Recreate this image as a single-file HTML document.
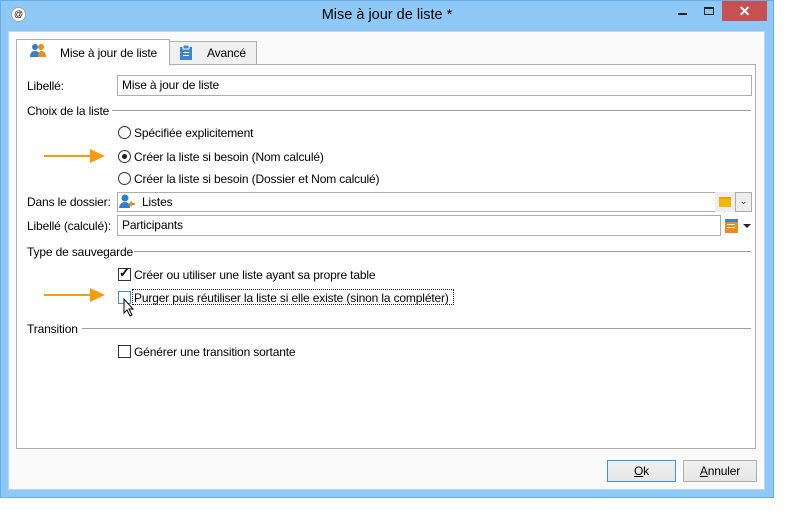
<!DOCTYPE html>
<html><head><meta charset="utf-8"><style>
*{box-sizing:border-box;margin:0;padding:0}
body{width:812px;height:521px;background:#fff;position:relative;overflow:hidden;font-family:"Liberation Sans",sans-serif;font-size:12px;letter-spacing:-0.15px;color:#000}
.a{position:absolute}
.win{left:0;top:0;width:774px;height:498px;background:#8ec8f6;border:1px solid #6aaee6}
.inner{left:8px;top:31px;width:757px;height:459px;background:#fafafa;border:1px solid #b8d6ee}
.panel{left:16px;top:64px;width:740px;height:385px;background:#fff;border:1px solid #adadad}
.inp{border:1px solid #adadad;background:#fff;height:21px;padding:2px 4px;line-height:15px}
.lbl{line-height:14px}
.line{height:1px;background:#a0a0a0}
.rad{width:13px;height:13px;border:1px solid #333;border-radius:50%;background:#fff}
.cb{width:13px;height:13px;border:1px solid #333;background:#fff}
.btn{border:1px solid #adadad;background:linear-gradient(#f0f0f0,#e5e5e5);text-align:center;line-height:20px;height:22px}
</style></head><body>
<div class="a win"></div>
<div class="a" style="left:11px;top:7px;width:15px;height:15px;border-radius:50%;background:#fff;border:1px solid #9a9;font-size:9px;text-align:center;line-height:13px">@</div>
<div class="a" style="left:0;width:774px;top:7px;text-align:center;font-size:14.5px;color:#000;letter-spacing:0">Mise à jour de liste *</div>
<div class="a" style="left:678px;top:13px;width:9px;height:2px;background:#222"></div>
<div class="a" style="left:704px;top:7px;width:10px;height:8px;border:1px solid #222;border-top-width:2px"></div>
<div class="a" style="left:722px;top:1px;width:45px;height:20px;background:#c75050;color:#fff;text-align:center;font-size:14px;line-height:20px;font-weight:bold">✕</div>
<div class="a inner"></div>
<div class="a panel"></div>
<div class="a" style="left:16px;top:39px;width:154px;height:26px;background:#fff;border:1px solid #adadad;border-bottom:none"></div>
<svg class="a" style="left:30px;top:43px" width="16" height="16"><circle cx="5" cy="4" r="3" fill="#2d7fd0"/><path d="M0 14 Q0 8 5 8 Q10 8 10 14Z" fill="#2d7fd0"/><circle cx="11" cy="4" r="3" fill="#f08a1c"/><path d="M8 14 Q8 8 11 8 Q16 8 16 14Z" fill="#f08a1c"/></svg>
<div class="a lbl" style="left:60px;top:46px">Mise à jour de liste</div>
<div class="a" style="left:169px;top:41px;width:88px;height:23px;background:#f0f0f0;border:1px solid #adadad;border-bottom:none"></div>
<svg class="a" style="left:180px;top:44px" width="12" height="16"><rect x="0" y="3" width="12" height="13" fill="#3b86d0"/><rect x="3" y="1" width="6" height="4" fill="#3b86d0" stroke="#fff" stroke-width="1"/><rect x="3" y="8" width="6" height="1" fill="#fff"/><rect x="3" y="11" width="6" height="1" fill="#fff"/></svg>
<div class="a lbl" style="left:207px;top:46px">Avancé</div>

<div class="a lbl" style="left:27px;top:79px">Libellé:</div>
<div class="a inp" style="left:117px;top:75px;width:635px">Mise à jour de liste</div>
<div class="a lbl" style="left:27px;top:104px">Choix de la liste</div>
<div class="a line" style="left:112px;top:110px;width:639px"></div>

<div class="a rad" style="left:118px;top:126px"></div>
<div class="a lbl" style="left:134px;top:126px">Spécifiée explicitement</div>
<div class="a rad" style="left:118px;top:150px"></div>
<div class="a" style="left:122px;top:154px;width:5px;height:5px;border-radius:50%;background:#222"></div>
<div class="a lbl" style="left:134px;top:150px">Créer la liste si besoin (Nom calculé)</div>
<div class="a rad" style="left:118px;top:172px"></div>
<div class="a lbl" style="left:134px;top:172px">Créer la liste si besoin (Dossier et Nom calculé)</div>
<svg class="a" style="left:44px;top:148px" width="62" height="16"><rect x="0" y="7" width="48" height="2" fill="#f39c12"/><path d="M46 1 L61 8 L46 15Z" fill="#f39c12"/></svg>

<div class="a lbl" style="left:27px;top:195px">Dans le dossier:</div>
<div class="a inp" style="left:117px;top:192px;width:599px;height:20px;padding-left:24px">Listes</div>
<svg class="a" style="left:119px;top:193px" width="16" height="16"><circle cx="6" cy="5" r="3.5" fill="#2d7fd0"/><path d="M0 15 Q1 9 6 9 Q11 9 11 15Z" fill="#2d7fd0"/><path d="M9 11 L13 8 L13 10 L16 10 L16 12 L13 12 L13 14Z" fill="#f08a1c"/></svg>
<div class="a" style="left:715px;top:192px;width:20px;height:20px;background:#eee"></div>
<div class="a" style="left:719px;top:197px;width:12px;height:10px;background:#f0b800;border-top:2px solid #f4a000"></div>
<div class="a" style="left:735px;top:192px;width:17px;height:20px;border:1px solid #adadad;background:#eee;text-align:center;font-size:10px;line-height:18px;color:#444">⌄</div>

<div class="a lbl" style="left:27px;top:219px">Libellé (calculé):</div>
<div class="a inp" style="left:117px;top:215px;width:604px">Participants</div>
<div class="a" style="left:725px;top:219px;width:13px;height:14px;background:#f08a1c;border-top:3px solid #3b86d0"></div>
<div class="a" style="left:727px;top:224px;width:8px;height:1px;background:#fff;box-shadow:0 3px 0 #fff"></div>
<div class="a" style="left:743px;top:224px;width:0;height:0;border-left:4px solid transparent;border-right:4px solid transparent;border-top:4px solid #222"></div>

<div class="a lbl" style="left:27px;top:245px">Type de sauvegarde</div>
<div class="a line" style="left:134px;top:251px;width:617px"></div>
<div class="a cb" style="left:118px;top:268px"></div>
<div class="a" style="left:119px;top:265px;font-size:13px;font-weight:bold">✓</div>
<div class="a lbl" style="left:134px;top:268px">Créer ou utiliser une liste ayant sa propre table</div>
<div class="a cb" style="left:118px;top:291px;border-color:#3a8ee6"></div>
<div class="a" style="left:132px;top:289px;width:322px;height:16px;border:1px dotted #222"></div>
<div class="a lbl" style="left:134px;top:291px">Purger puis réutiliser la liste si elle existe (sinon la compléter)</div>
<svg class="a" style="left:44px;top:287px" width="62" height="16"><rect x="0" y="7" width="48" height="2" fill="#f39c12"/><path d="M46 1 L61 8 L46 15Z" fill="#f39c12"/></svg>
<svg class="a" style="left:123px;top:298px" width="12" height="20"><path d="M1 1 L1 15 L4 12 L7 18 L9 17 L6 11 L10 11Z" fill="#fff" stroke="#000" stroke-width="1"/></svg>

<div class="a lbl" style="left:27px;top:322px">Transition</div>
<div class="a line" style="left:82px;top:328px;width:669px"></div>
<div class="a cb" style="left:118px;top:345px"></div>
<div class="a lbl" style="left:134px;top:345px">Générer une transition sortante</div>

<div class="a btn" style="left:607px;top:460px;width:69px;border-color:#3c95e6"><u>O</u>k</div>
<div class="a btn" style="left:683px;top:460px;width:74px"><u>A</u>nnuler</div>
</body></html>
